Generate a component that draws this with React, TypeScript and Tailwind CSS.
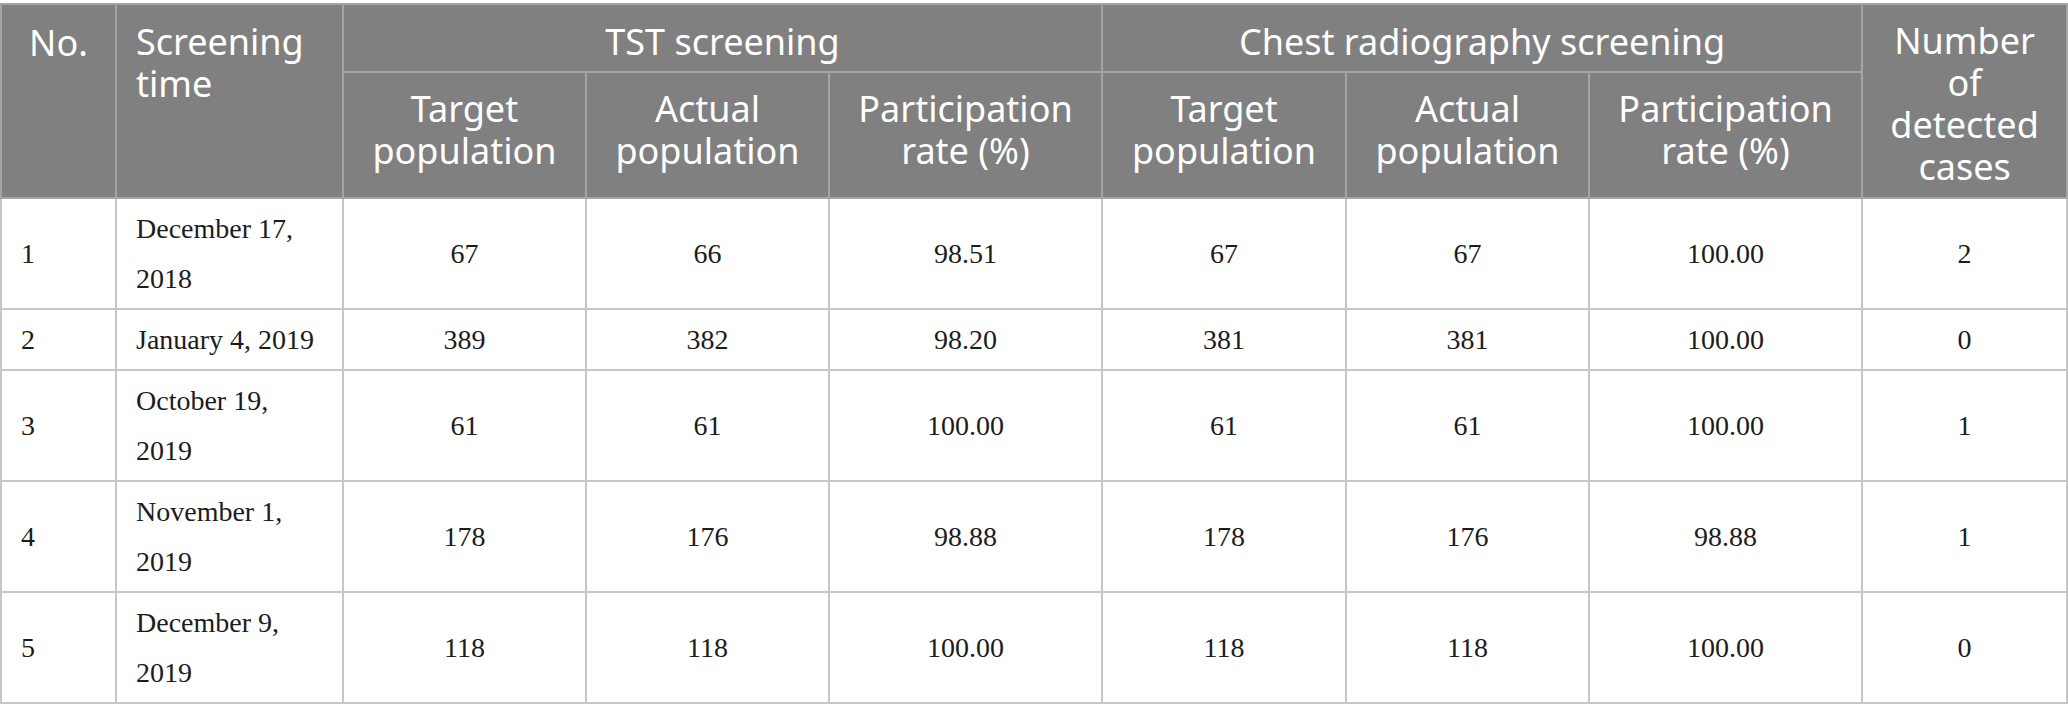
import React from 'react';

const rows = [
  { no: '1', date: ['December 17,', '2018'], tt: '67', ta: '66', tr: '98.51', ct: '67', ca: '67', cr: '100.00', cases: '2' },
  { no: '2', date: ['January 4, 2019'], tt: '389', ta: '382', tr: '98.20', ct: '381', ca: '381', cr: '100.00', cases: '0' },
  { no: '3', date: ['October 19,', '2019'], tt: '61', ta: '61', tr: '100.00', ct: '61', ca: '61', cr: '100.00', cases: '1' },
  { no: '4', date: ['November 1,', '2019'], tt: '178', ta: '176', tr: '98.88', ct: '178', ca: '176', cr: '98.88', cases: '1' },
  { no: '5', date: ['December 9,', '2019'], tt: '118', ta: '118', tr: '100.00', ct: '118', ca: '118', cr: '100.00', cases: '0' },
];

const th = 'border-2 border-[#a3a4a3] font-normal';
const sub = `${th} align-middle text-center pb-[10px]`;
const td = 'border-2 border-[#c6c6c6] text-center align-middle';

export default function App() {
  return (
    <div className="w-[2068px] h-[723px] bg-white pt-[3px]">
      <table
        className="table-fixed border-collapse w-[2066px] text-[#1c1c1c]"
        style={{ fontFamily: '"Liberation Serif", serif' }}
      >
        <colgroup>
          <col className="w-[115px]" />
          <col className="w-[227px]" />
          <col className="w-[243px]" />
          <col className="w-[243px]" />
          <col className="w-[273px]" />
          <col className="w-[244px]" />
          <col className="w-[243px]" />
          <col className="w-[273px]" />
          <col className="w-[205px]" />
        </colgroup>
        <thead
          className="bg-[#7f807f] text-white text-[36px] leading-[42px]"
          style={{ fontFamily: '"Noto Sans", "Open Sans", sans-serif' }}
        >
          <tr className="h-[68px]">
            <th rowSpan={2} className={`${th} align-top text-center pt-[17px]`}>No.</th>
            <th rowSpan={2} className={`${th} align-top text-left pt-[16px] pl-[19px]`}>
              Screening<br />time
            </th>
            <th colSpan={3} className={`${th} align-middle text-center pt-[8px]`}>TST screening</th>
            <th colSpan={3} className={`${th} align-middle text-center pt-[8px]`}>Chest radiography screening</th>
            <th rowSpan={2} className={`${th} align-middle text-center pt-[6px]`}>
              Number<br />of<br />detected<br />cases
            </th>
          </tr>
          <tr className="h-[126px]">
            <th className={sub}>Target<br />population</th>
            <th className={sub}>Actual<br />population</th>
            <th className={sub}>Participation<br />rate (%)</th>
            <th className={sub}>Target<br />population</th>
            <th className={sub}>Actual<br />population</th>
            <th className={sub}>Participation<br />rate (%)</th>
          </tr>
        </thead>
        <tbody className="text-[28px] leading-[50px]">
          {rows.map((r) => (
            <tr key={r.no} className={r.date.length > 1 ? 'h-[111px]' : 'h-[61px]'}>
              <td className={`${td} !text-left pl-[19px]`}>{r.no}</td>
              <td className={`${td} !text-left pl-[19px]`}>
                {r.date.map((d) => (
                  <div key={d}>{d}</div>
                ))}
              </td>
              <td className={td}>{r.tt}</td>
              <td className={td}>{r.ta}</td>
              <td className={td}>{r.tr}</td>
              <td className={td}>{r.ct}</td>
              <td className={td}>{r.ca}</td>
              <td className={td}>{r.cr}</td>
              <td className={td}>{r.cases}</td>
            </tr>
          ))}
        </tbody>
      </table>
    </div>
  );
}
